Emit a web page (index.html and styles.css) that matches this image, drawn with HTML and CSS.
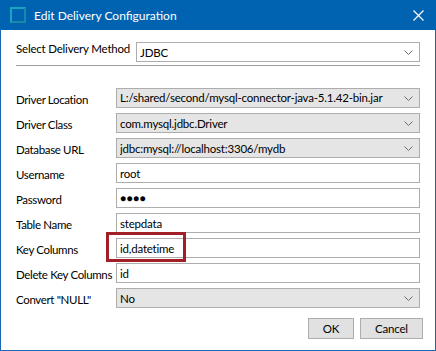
FILE: index.html
```html
<!DOCTYPE html>
<html lang="en">
<head>
  <meta charset="UTF-8" />
  <title>Edit Delivery Configuration</title>
  <link rel="stylesheet" href="styles.css">
</head>
<body>
  <div class="window">
    <div class="titlebar">
      <span class="app-icon"></span>
      <span class="title">Edit Delivery Configuration</span>
      <svg class="close" width="11" height="11" viewBox="0 0 11 11"><path d="M0.5 0.5 L10.5 10.5 M10.5 0.5 L0.5 10.5" stroke="#fff" stroke-width="1.2" fill="none"/></svg>
    </div>
    <div class="content">
      <div class="method-row">
        <span class="label">Select Delivery Method</span>
        <div class="combo editable">
          <span class="value">JDBC</span>
          <svg class="arrow" width="9" height="5" viewBox="0 0 9 5"><path d="M0.5 0.5 L4.5 4.5 L8.5 0.5" stroke="#6d6d6d" fill="none"/></svg>
        </div>
      </div>
      <div class="separator"></div>
      <div class="fields">
        <span class="label">Driver Location</span>
        <div class="combo focused">
          <span class="value"><span class="focus-rect">L:/shared/second/mysql-connector-java-5.1.42-bin.jar</span></span>
          <svg class="arrow" width="9" height="5" viewBox="0 0 9 5"><path d="M0.5 0.5 L4.5 4.5 L8.5 0.5" stroke="#6d6d6d" fill="none"/></svg>
        </div>

        <span class="label">Driver Class</span>
        <div class="combo">
          <span class="value">com.mysql.jdbc.Driver</span>
          <svg class="arrow" width="9" height="5" viewBox="0 0 9 5"><path d="M0.5 0.5 L4.5 4.5 L8.5 0.5" stroke="#6d6d6d" fill="none"/></svg>
        </div>

        <span class="label">Database URL</span>
        <div class="combo">
          <span class="value">jdbc:mysql://localhost:3306/mydb</span>
          <svg class="arrow" width="9" height="5" viewBox="0 0 9 5"><path d="M0.5 0.5 L4.5 4.5 L8.5 0.5" stroke="#6d6d6d" fill="none"/></svg>
        </div>

        <span class="label">Username</span>
        <div class="textbox">root</div>

        <span class="label">Password</span>
        <div class="textbox password">●●●●</div>

        <span class="label">Table Name</span>
        <div class="textbox">stepdata</div>

        <span class="label">Key Columns</span>
        <div class="textbox highlighted">id,datetime<span class="marker"></span></div>

        <span class="label">Delete Key Columns</span>
        <div class="textbox">id</div>

        <span class="label">Convert "NULL"</span>
        <div class="combo">
          <span class="value">No</span>
          <svg class="arrow" width="9" height="5" viewBox="0 0 9 5"><path d="M0.5 0.5 L4.5 4.5 L8.5 0.5" stroke="#6d6d6d" fill="none"/></svg>
        </div>
      </div>
      <div class="buttons">
        <div class="button ok">OK</div>
        <div class="button cancel">Cancel</div>
      </div>
    </div>
  </div>
</body>
</html>
```

FILE: styles.css
```css
body {
  margin: 0;
  font-family: Lato, "Open Sans", sans-serif;
  font-size: 11.5px;
  letter-spacing: -0.2px;
  color: #000;
  background: #fff;
}
.window {
  width: 436px;
  height: 351px;
  box-sizing: border-box;
  border: 1px solid #1a66b0;
  border-top: none;
  background: #fff;
  display: flex;
  flex-direction: column;
}
.titlebar {
  height: 30px;
  margin: 0 -1px;
  background: #0063b1;
  color: #fff;
  display: flex;
  align-items: center;
  padding: 0 11px 0 10px;
}
.app-icon {
  width: 12px;
  height: 12px;
  border: 2px solid #1ea3bf;
  border-right-color: #178aa8;
  border-bottom-color: #178aa8;
  margin-right: 8px;
}
.title {
  flex: 1;
  font-size: 12px;
  letter-spacing: 0;
  padding-top: 1px;
}
.close {
  margin-right: 1px;
}
.content {
  flex: 1;
  padding: 12px 15px 0 15px;
  display: flex;
  flex-direction: column;
}
.method-row {
  display: flex;
  align-items: flex-start;
  height: 20px;
}
.method-row .label {
  width: 120px;
  white-space: nowrap;
}
.method-row .combo {
  flex: 1;
}
.separator {
  margin-top: 3px;
  height: 1px;
  background: #a0a0a0;
  border-bottom: 1px solid #fff;
}
.fields {
  margin-top: 21px;
  display: grid;
  grid-template-columns: 100px 304px;
  grid-auto-rows: 20px;
  row-gap: 5px;
  align-items: center;
}
.fields .label {
  padding-top: 3px;
  white-space: nowrap;
  letter-spacing: -0.35px;
}
.combo, .textbox {
  height: 20px;
  box-sizing: border-box;
  border: 1px solid #adadad;
  display: flex;
  align-items: center;
  white-space: nowrap;
}
.combo {
  background: #e5e5e5;
  padding-left: 3px;
}
.combo.editable {
  background: #fff;
}
.combo .value {
  flex: 1;
  overflow: hidden;
}
.combo .arrow {
  margin: 0 6px;
}
.focus-rect {
  display: inline-block;
  outline: 1px dotted #000;
  padding: 0 1px 1px 0;
  width: 279px;
  line-height: 13px;
}
.textbox {
  background: #fff;
  padding-left: 3px;
}
.password {
  font-size: 10px;
  letter-spacing: 0.5px;
}
.highlighted {
  position: relative;
}
.marker {
  position: absolute;
  left: -11px;
  top: -7px;
  width: 74px;
  height: 24px;
  border: 3px solid #a31f28;
}
.buttons {
  margin-top: 10px;
  display: flex;
  justify-content: flex-end;
  gap: 6px;
  margin-right: -3px;
}
.button {
  height: 21px;
  box-sizing: border-box;
  border: 1px solid #adadad;
  background: #e1e1e1;
  display: flex;
  align-items: center;
  justify-content: center;
}
.ok {
  width: 46px;
}
.cancel {
  width: 63px;
}
```
